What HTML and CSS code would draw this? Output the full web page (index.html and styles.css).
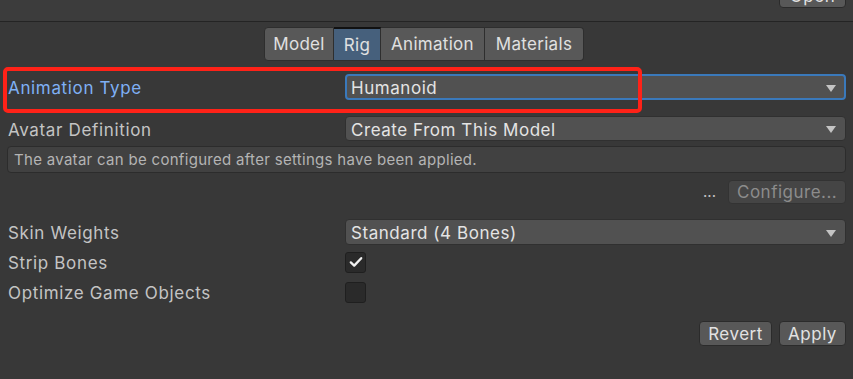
FILE: index.html
```html
<!DOCTYPE html>
<html lang="en">
<head>
  <meta charset="UTF-8" />
  <title>Import Settings - Rig</title>
  <link rel="stylesheet" href="styles.css">
</head>
<body>
  <div class="topbar">
    <button class="btn open-btn">Open</button>
  </div>

  <div class="tabs">
    <button class="tab">Model</button>
    <button class="tab active">Rig</button>
    <button class="tab">Animation</button>
    <button class="tab">Materials</button>
  </div>

  <div class="inspector">
    <div class="row row-type">
      <label class="label highlight">Animation Type</label>
      <div class="dropdown focused">
        <span>Humanoid</span>
        <span class="arrow"></span>
      </div>
    </div>

    <div class="row row-avatar">
      <label class="label">Avatar Definition</label>
      <div class="dropdown">
        <span>Create From This Model</span>
        <span class="arrow"></span>
      </div>
    </div>

    <div class="helpbox">The avatar can be configured after settings have been applied.</div>

    <div class="configure-row">
      <span class="dots">...</span>
      <button class="btn disabled">Configure...</button>
    </div>

    <div class="row row-skin">
      <label class="label">Skin Weights</label>
      <div class="dropdown">
        <span>Standard (4 Bones)</span>
        <span class="arrow"></span>
      </div>
    </div>

    <div class="row row-check">
      <label class="label">Strip Bones</label>
      <span class="checkbox">
        <svg width="14" height="12" viewBox="0 0 14 12">
          <path d="M1.8 6.4 L5.2 9.6 L12.2 2.2" fill="none" stroke="#f0f0f0" stroke-width="2.3" stroke-linecap="round" stroke-linejoin="round"/>
        </svg>
      </span>
    </div>

    <div class="row row-check">
      <label class="label">Optimize Game Objects</label>
      <span class="checkbox"></span>
    </div>

    <div class="footer">
      <button class="btn">Revert</button>
      <button class="btn">Apply</button>
    </div>
  </div>

  <!-- annotation drawn over the Animation Type row -->
  <div class="callout"></div>
</body>
</html>
```

FILE: styles.css
```css
body {
  margin: 0;
  background-color: #383838;
  font-family: Inter, "Noto Sans", sans-serif;
  color: #c4c4c4;
  font-size: 17px;
  height: 379px;
  overflow: hidden;
  position: relative;
}
.topbar {
  height: 22px;
  background-color: #3c3c3c;
  border-bottom: 1px solid #242424;
  display: flex;
  justify-content: flex-end;
  padding-right: 7px;
  box-sizing: border-box;
}
.btn {
  font-family: inherit;
  font-size: 17px;
  color: #e2e2e2;
  background-color: #585858;
  border: 1px solid #2b2b2b;
  border-radius: 4px;
  padding: 0 8px;
  height: 25px;
  line-height: 22px;
  letter-spacing: 0.5px;
}
.open-btn {
  margin-top: -17px;
  width: 67px;
}
.tabs {
  display: flex;
  justify-content: center;
  margin: 5px 0 0 -5px;
  height: 34px;
}
.tab {
  font-family: inherit;
  font-size: 17px;
  color: #e0e0e0;
  background-color: #585858;
  border: 1px solid #2e2e2e;
  border-left-width: 0;
  height: 34px;
  padding: 0 6px;
  letter-spacing: 0.3px;
}
.tab:first-child {
  border-left-width: 1px;
  border-radius: 4px 0 0 4px;
  width: 70px;
}
.tab:last-child {
  border-radius: 0 4px 4px 0;
  width: 99px;
}
.tab.active {
  background-color: #46607c;
  border-top: 2px solid #111;
  width: 47px;
}
.tab:nth-child(3) {
  width: 104px;
}
.inspector {
  padding: 0 7px 0 8px;
}
.row {
  display: flex;
  align-items: center;
}
.label {
  width: 337px;
  flex-shrink: 0;
  letter-spacing: 0.65px;
  padding-top: 2px;
}
.label.highlight {
  color: #7fb0f5;
}
.row-type {
  margin-top: 13px;
  height: 26px;
}
.row-avatar {
  margin-top: 16px;
  height: 25px;
}
.dropdown {
  flex: 1;
  height: 100%;
  box-sizing: border-box;
  background-color: #515151;
  border: 1px solid #303030;
  border-radius: 4px;
  display: flex;
  align-items: center;
  justify-content: space-between;
  padding: 2px 9px 0 5px;
  color: #e4e4e4;
  letter-spacing: 0.55px;
}
.dropdown.focused {
  border: 2px solid #3a79bb;
  padding-left: 4px;
  padding-right: 8px;
}
.arrow {
  width: 0;
  height: 0;
  border-left: 5px solid transparent;
  border-right: 5px solid transparent;
  border-top: 7px solid #c4c4c4;
}
.helpbox {
  margin: 5px 0 0 -1px;
  height: 27px;
  box-sizing: border-box;
  background-color: #414141;
  border: 1px solid #2c2c2c;
  border-radius: 4px;
  padding-left: 6px;
  font-size: 15px;
  line-height: 25px;
  letter-spacing: 0.3px;
  color: #b4b4b4;
}
.configure-row {
  margin-top: 7px;
  display: flex;
  justify-content: flex-end;
  align-items: center;
  gap: 12px;
  height: 24px;
}
.dots {
  color: #c4c4c4;
  font-size: 15px;
  line-height: 10px;
}
.btn.disabled {
  background-color: #454545;
  border-color: #333;
  color: #8c8c8c;
  width: 118px;
  height: 24px;
}
.row-skin {
  margin-top: 13px;
  height: 30px;
}
.row-skin .dropdown {
  height: 26px;
  flex: 1;
}
.row-check {
  height: 30px;
}
.checkbox {
  width: 21px;
  height: 21px;
  box-sizing: border-box;
  background-color: #2a2a2a;
  border: 1px solid #1f1f1f;
  border-radius: 3px;
  display: flex;
  align-items: center;
  justify-content: center;
}
.footer {
  margin-top: 14px;
  display: flex;
  justify-content: flex-end;
  gap: 7px;
}
.footer .btn {
  height: 25px;
  padding: 0 6px;
}
.footer .btn:first-child {
  width: 73px;
}
.footer .btn:last-child {
  width: 67px;
}
.callout {
  position: absolute;
  left: 3px;
  top: 67px;
  width: 639px;
  height: 46px;
  box-sizing: border-box;
  border: 4px solid #ff2218;
  border-radius: 5px;
}
```
